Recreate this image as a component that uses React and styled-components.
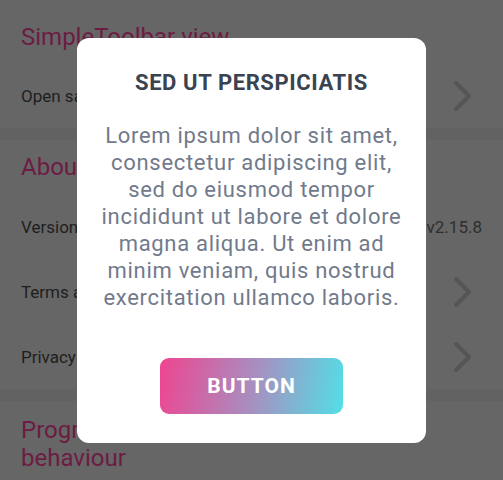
import React from 'react';
import styled, { createGlobalStyle } from 'styled-components';

const GlobalStyle = createGlobalStyle`
  html, body {
    margin: 0;
    padding: 0;
    background: #626262;
    font-family: Roboto, "Liberation Sans", sans-serif;
  }
`;

const Page = styled.div`
  display: flex;
  flex-direction: column;
  gap: 12px;
  height: 480px;
  overflow: hidden;
  background: #626262;
`;

const Section = styled.section`
  display: flex;
  flex-direction: column;
  background: #666666;
`;

const SectionTitle = styled.h2`
  margin: 0;
  padding: ${(p) => p.$top}px 21px ${(p) => p.$bottom}px;
  font-size: 24px;
  line-height: 28px;
  font-weight: 400;
  color: #6c1c43;
`;

const Row = styled.div`
  display: flex;
  align-items: center;
  justify-content: space-between;
  height: 65px;
  padding: 0 21px;
  font-size: 17px;
  line-height: 20px;
  color: #1e1e1e;
`;

const Value = styled.span`
  color: #2e2e2e;
`;

const Chevron = () => (
  <svg width="22" height="32" viewBox="0 0 22 32" style={{ marginRight: 8 }}>
    <path d="M4 3 L17 16 L4 29" fill="none" stroke="#555" strokeWidth="4" strokeLinecap="round" strokeLinejoin="round" />
  </svg>
);

const Overlay = styled.div`
  position: fixed;
  inset: 0;
  display: flex;
  align-items: center;
  justify-content: center;
`;

const Dialog = styled.div`
  width: 349px;
  box-sizing: border-box;
  padding: 33px 22px 29px;
  background: #ffffff;
  border-radius: 12px;
  display: flex;
  flex-direction: column;
  align-items: center;
  text-align: center;
`;

const Title = styled.h3`
  margin: 0;
  font-size: 22px;
  line-height: 24px;
  font-weight: 700;
  letter-spacing: 0.6px;
  color: #3a4351;
`;

const Body = styled.p`
  margin: 27px 0 0;
  width: 305px;
  font-size: 22px;
  line-height: 27px;
  letter-spacing: 0.7px;
  color: #717a8b;
`;

const Button = styled.button`
  margin-top: 47px;
  width: 183px;
  height: 56px;
  border: 0;
  border-radius: 9px;
  background: linear-gradient(100deg, #ee4590 0%, #a98dbf 50%, #52dfe6 100%);
  color: #ffffff;
  font-family: Roboto, "Liberation Sans", sans-serif;
  font-size: 21px;
  font-weight: 700;
  letter-spacing: 1px;
`;

export default function App() {
  return (
    <>
      <GlobalStyle />
      <Page>
        <Section>
          <SectionTitle $top={23} $bottom={12}>SimpleToolbar view</SectionTitle>
          <Row>
            <span>Open sample</span>
            <Chevron />
          </Row>
        </Section>
        <Section>
          <SectionTitle $top={13} $bottom={13}>About</SectionTitle>
          <Row>
            <span>Version</span>
            <Value>v2.15.8</Value>
          </Row>
          <Row>
            <span>Terms and conditions</span>
            <Chevron />
          </Row>
          <Row>
            <span>Privacy policy</span>
            <Chevron />
          </Row>
        </Section>
        <Section>
          <SectionTitle $top={15} $bottom={12}>
            Progress
            <br />
            behaviour
          </SectionTitle>
        </Section>
      </Page>
      <Overlay>
        <Dialog>
          <Title>SED UT PERSPICIATIS</Title>
          <Body>
            Lorem ipsum dolor sit amet, consectetur adipiscing elit, sed do eiusmod tempor incididunt ut labore et dolore magna aliqua. Ut enim ad minim veniam, quis nostrud exercitation ullamco laboris.
          </Body>
          <Button>BUTTON</Button>
        </Dialog>
      </Overlay>
    </>
  );
}
